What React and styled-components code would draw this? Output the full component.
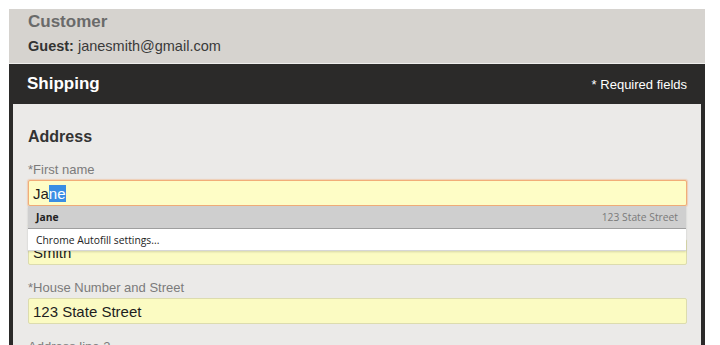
import React from "react";
import styled, { createGlobalStyle } from "styled-components";

const Global = createGlobalStyle`
  html, body { margin: 0; padding: 0; background: #ffffff; }
  body { font-family: "Liberation Sans", Arial, sans-serif; }
`;

const Page = styled.div`
  width: 720px;
  height: 345px;
  box-sizing: border-box;
  padding: 9px 15px 0 9px;
  overflow: hidden;
`;

const CustomerPanel = styled.section`
  background: #d6d3cf;
  padding: 3px 19px 8px;
  border-bottom: 1px solid #efeeec;
`;

const CustomerTitle = styled.h2`
  margin: 0 0 5px;
  font-size: 17px;
  line-height: 20px;
  font-weight: bold;
  color: #6a6a6a;
`;

const GuestLine = styled.div`
  font-size: 14.5px;
  line-height: 18px;
  color: #3a3a3a;
  b { font-weight: bold; color: #333; }
`;

const ShippingFrame = styled.section`
  background: #2b2a29;
  padding: 0 4px;
  height: 400px;
`;

const ShippingHeader = styled.header`
  height: 40px;
  display: flex;
  align-items: center;
  justify-content: space-between;
  padding: 0 14px 0 14px;
  color: #ffffff;
`;

const ShippingTitle = styled.h2`
  margin: 0;
  font-size: 17px;
  font-weight: bold;
`;

const Required = styled.span`
  font-size: 13px;
`;

const FormBody = styled.div`
  background: #ebeae8;
  padding: 23px 14px 0 15px;
  height: 100%;
`;

const SectionTitle = styled.h3`
  margin: 0 0 15px;
  font-size: 16px;
  line-height: 20px;
  font-weight: bold;
  color: #333333;
`;

const FieldGroup = styled.div`
  margin-bottom: 15px;
`;

const Label = styled.div`
  font-size: 13px;
  line-height: 16px;
  color: #7b7b7b;
  margin-bottom: 2px;
`;

const InputWrap = styled.div`
  position: relative;
`;

const FieldBox = styled.div`
  box-sizing: border-box;
  height: 26px;
  display: flex;
  align-items: center;
  padding: 0 4px;
  font-size: 15px;
  color: #1e1e1e;
  white-space: pre;
  background: ${(p) => (p.$focused ? "#fefdc6" : "#fbfbc2")};
  border: 1px solid ${(p) => (p.$focused ? "#f1ad78" : "#dcdcae")};
  border-radius: 2px;
  box-shadow: ${(p) => (p.$focused ? "0 0 1px 1px rgba(241,173,120,0.45)" : "none")};
`;

const Selected = styled.span`
  background: #3a8ee4;
  color: #ffffff;
`;

const Suggestions = styled.div`
  position: absolute;
  top: 100%;
  left: 0;
  right: 1px;
  z-index: 2;
  font-family: "Open Sans", "Noto Sans", sans-serif;
  font-size: 10.3px;
  box-shadow: 0 1px 2px rgba(0, 0, 0, 0.15);
`;

const SuggestionRow = styled.div`
  box-sizing: border-box;
  height: ${(p) => (p.$active ? "23px" : "22px")};
  display: flex;
  align-items: center;
  justify-content: space-between;
  padding: 0 8px;
  background: ${(p) => (p.$active ? "#cfcfcf" : "#ffffff")};
  border-bottom: 1px solid ${(p) => (p.$active ? "#9f9f9f" : "#d6d6d6")};
  color: #222;
`;

const SuggestionName = styled.span`
  font-weight: bold;
`;

const SuggestionHint = styled.span`
  color: #7a7a7a;
`;

function Field({ label, value, focused, children }) {
  return (
    <FieldGroup>
      <Label>{label}</Label>
      <InputWrap>
        <FieldBox $focused={focused}>{value}</FieldBox>
        {children}
      </InputWrap>
    </FieldGroup>
  );
}

export default function App() {
  return (
    <>
      <Global />
      <Page>
        <CustomerPanel>
          <CustomerTitle>Customer</CustomerTitle>
          <GuestLine>
            <b>Guest:</b> janesmith@gmail.com
          </GuestLine>
        </CustomerPanel>
        <ShippingFrame>
          <ShippingHeader>
            <ShippingTitle>Shipping</ShippingTitle>
            <Required>* Required fields</Required>
          </ShippingHeader>
          <FormBody>
            <SectionTitle>Address</SectionTitle>
            <Field
              label="*First name"
              focused
              value={
                <>
                  Ja<Selected>ne</Selected>
                </>
              }
            >
              <Suggestions>
                <SuggestionRow $active>
                  <SuggestionName>Jane</SuggestionName>
                  <SuggestionHint>123 State Street</SuggestionHint>
                </SuggestionRow>
                <SuggestionRow>Chrome Autofill settings...</SuggestionRow>
              </Suggestions>
            </Field>
            <Field label="*Last name" value="Smith" />
            <Field label="*House Number and Street" value="123 State Street" />
            <Field label="Address line 2" value="" />
          </FormBody>
        </ShippingFrame>
      </Page>
    </>
  );
}
